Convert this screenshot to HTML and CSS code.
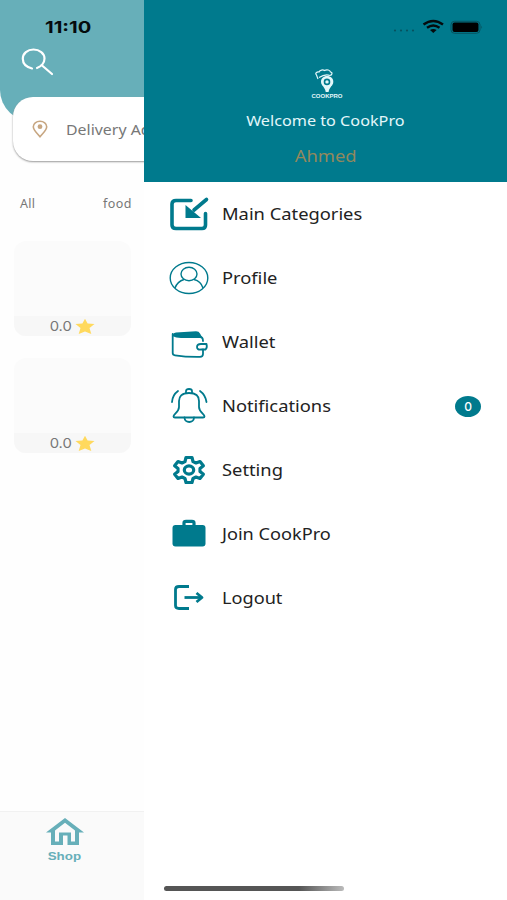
FILE: index.html
```html
<!DOCTYPE html>
<html lang="en">
<head>
<meta charset="utf-8">
<title>CookPro</title>
<link rel="stylesheet" href="styles.css">
</head>
<body>
<div class="app">
  <section class="shop">
    <header class="shop-header">
      <svg class="search" viewBox="0 0 34 28"><path d="M11 20.500C5 19 1.800 15.500 1.800 10.800C1.800 5.500 6.500 1.500 12.500 1.500S23.500 5.500 23.500 10.500C23.500 14.500 20.500 18.500 16 20M20.500 17L31 26"/></svg>
    </header>
    <div class="address">
      <svg class="pin" viewBox="0 0 16 18"><path d="M8 16.800C5 13 1.300 10.500 1.300 6.800C1.300 3.500 4.300 1.200 8 1.200S14.700 3.500 14.700 6.800C14.700 10.500 11 13 8 16.800Z"/><circle cx="8" cy="6.700" r="2.400"/></svg>
      <span class="address-text">Delivery Address</span>
    </div>
    <div class="tabs"><span>All</span><span class="tab-food">food</span></div>
    <div class="cards">
      <article class="card"><div class="rating"><span class="score">0.0</span><svg class="star" viewBox="0 0 20 17"><path d="M10 .7L12.600 5.500L19.500 6.100L14.500 10L16.300 16L10 13.500L3.700 16L5.500 10L.5 6.100L7.400 5.500Z"/></svg></div></article>
      <article class="card"><div class="rating"><span class="score">0.0</span><svg class="star" viewBox="0 0 20 17"><path d="M10 .7L12.600 5.500L19.500 6.100L14.500 10L16.300 16L10 13.500L3.700 16L5.500 10L.5 6.100L7.400 5.500Z"/></svg></div></article>
    </div>
    <nav class="bottom-nav">
      <svg class="home" viewBox="0 0 38 28"><path fill-rule="evenodd" d="M0 14.500L19 0L38 14.500H33V27H21.500V17.500H17V27H5V14.500ZM9 12.500V23.500H13V14.500H25V23.500H29V12.500L19 4.800Z"/></svg>
      <span class="nav-label">Shop</span>
    </nav>
  </section>

  <aside class="drawer">
    <header class="drawer-header">
      <svg class="logo" viewBox="0 0 34 30">
        <path class="hat" d="M8 10L6.500 6C4.500 4.500 7 2.500 9 3C10 .8 13 .5 14.500 1.500C17 0 20 1.200 20.500 3C23 3.500 22 6 20 6.500M9 8.500C13 6 17 5.300 20 6.500"/>
        <path class="mark" fill-rule="evenodd" d="M17 7C21 7 23.300 9.500 23.300 12.800C23.300 17 19.500 17.500 18.600 23H15.700C15 17.500 11 17 11 12.800C11 9.500 13.500 7 17 7ZM17 9.600A3.300 3.300 0 1 0 17 16.200A3.300 3.300 0 1 0 17 9.600Z"/>
        <circle cx="17" cy="12.900" r="1.700" class="mark"/>
        <text x="1.500" y="28.500" textLength="31" lengthAdjust="spacingAndGlyphs">COOKPRO</text>
      </svg>
      <p class="welcome">Welcome to CookPro</p>
      <p class="user">Ahmed</p>
    </header>
    <ul class="menu">
      <li><svg class="icon" viewBox="0 0 38 38"><path class="bold" d="M21 5.500H6Q2 5.500 2 9V30Q2 33.500 6 33.500H32Q35.500 33.500 35.500 30V18.500"/><path class="bold" d="M36.500 4.500L24 15"/><path class="solid" d="M15.500 10V23H31Z"/></svg><span class="label">Main Categories</span></li>
      <li><svg class="icon" viewBox="0 0 38 38"><g class="thin"><ellipse cx="19" cy="19" rx="18.800" ry="15.500"/><ellipse cx="19" cy="15" rx="8" ry="6.800"/><path d="M5 29C7 23.500 10.500 21.500 14 20.500M24 20.500C28 21.500 31.500 24 33 29"/></g></svg><span class="label">Profile</span></li>
      <li><svg class="icon down" viewBox="0 0 38 38"><path class="solid" d="M3 9.500Q3 7.800 6 7.500L26 6.300Q29 6.300 30 8.500L32 12Q18 13 6 11.500Q3 11 3 9.500Z"/><g class="line"><path d="M2.700 9V28Q2.700 30 5 30.300Q16 32 30 31.800Q33 31.800 33 29V24.500M4 10.500Q6 12 11 12L30 12Q33 12 33 16"/><path d="M36.500 19H31Q27 19 27 22T31 24.500H35.500Q37.500 23 36.500 19Z"/></g></svg><span class="label">Wallet</span></li>
      <li><svg class="icon" viewBox="0 0 38 38"><g class="line"><path d="M19 6C11.500 6 9 9.500 9 14V20C9 25 3.500 27 3.500 29.500Q3.500 30.500 5 30.500H33Q34.500 30.500 34.500 29.500C34.500 27 29 25 29 20V14C29 9.500 26.500 6 19 6Z"/><path d="M16 6V4Q16 2 19 2T22 4V6M14.500 30.500C14.500 36.500 24 36.500 24 30.500M8 4Q2.500 8 2 15M30 4Q35.500 8 36.500 15"/></g></svg><span class="label">Notifications</span><span class="badge">0</span></li>
      <li><svg class="icon" viewBox="0 0 38 38"><g class="gear"><path d="M16 6.500H22L23 10.600L26 12L30 10.500L33.400 14.800L30 17.500V20.500L33.400 23.300L30 27.500L26 26L23 27.500L22 31.500H16L15 27.500L12 26L8 27.500L4.600 23.300L8 20.500V17.500L4.600 14.800L8 10.500L12 12L15 10.600Z"/><ellipse cx="19" cy="19" rx="4.700" ry="4.100"/></g></svg><span class="label">Setting</span></li>
      <li><svg class="icon" viewBox="0 0 38 38"><rect class="solid" x="2.500" y="10" width="33" height="21.500" rx="3"/><path class="gear" d="M14 11V8Q14 6.300 16 6.300H22Q24 6.300 24 8V11"/></svg><span class="label join">Join CookPro</span></li>
      <li><svg class="icon" viewBox="0 0 38 38"><path class="exit" d="M19 7.500H9Q5.500 7.500 5.500 10.500V26.500Q5.500 29.500 9 29.500H19"/><path class="exit" d="M14.500 18.500H31"/><path class="exit" d="M26.500 14L32 18.500L26.500 23"/></svg><span class="label join">Logout</span></li>
    </ul>
  </aside>

  <div class="status-bar">
    <time>11:10</time>
    <svg class="status-icons" viewBox="0 0 92 18">
      <g class="dots"><circle cx="3" cy="12.500" r="1.100"/><circle cx="9" cy="12.500" r="1.100"/><circle cx="15" cy="12.500" r="1.100"/><circle cx="21" cy="12.500" r="1.100"/></g>
      <g class="wifi"><path d="M31.500 6.500Q41.300-.7 51 6.500M35 9.800Q41.300 5.200 47.500 9.800"/><path class="wifi-end" d="M38 12Q41.300 10 44.600 12L41.300 15Z"/></g>
      <rect class="battery-frame" x="59" y="3.300" width="29" height="12" rx="3.500"/><rect x="60.500" y="4.600" width="26" height="9.400" rx="2"/><path class="battery-tip" d="M89.300 7.500Q91 9.300 89.300 11.100Z"/>
    </svg>
  </div>
  <div class="home-indicator"></div>
</div>
</body>
</html>
```
FILE: styles.css
```css
* { box-sizing: border-box; }
body { margin: 0; background: #fff; font-family: "Noto Sans", "Open Sans", sans-serif; }
svg { display: block; flex: none; overflow: visible; }
.app { position: relative; display: flex; width: 507px; height: 900px; overflow: hidden; }

.shop { display: flex; flex-direction: column; width: 144px; overflow: hidden; background: #fefefe; color: #777; }
.shop-header { flex: none; height: 122px; padding: 48px 0 0 21px; background: #67afb9; border-bottom-left-radius: 34px 32px; }
.search { width: 34px; height: 28px; fill: none; stroke: #fff; stroke-width: 2.200; stroke-linecap: round; }
.address { display: flex; flex: none; align-items: center; width: 300px; height: 64px; margin: -25px 0 0 13px; padding-left: 19px; gap: 18px; background: #fff; border-radius: 20px; box-shadow: 0 1px 2px #999; }
.pin { width: 16px; height: 18px; fill: none; stroke: #c7a681; stroke-width: 1.6; }
.pin circle { fill: #c7a681; stroke: none; }
.address-text { font-size: 15px; white-space: nowrap; transform: scaleX(1.06); transform-origin: left; }
.tabs { display: flex; justify-content: space-between; padding: 33px 12px 0 20px; font-size: 12.500px; line-height: 20px; letter-spacing: .3px; }
.tab-food { letter-spacing: .5px; }
.cards { display: flex; flex-direction: column; gap: 22px; padding: 27px 13px 0 14px; }
.card { display: flex; flex-direction: column; justify-content: flex-end; height: 95px; border-radius: 12px; overflow: hidden; background: #fbfbfb; }
.rating { display: flex; align-items: center; justify-content: center; gap: 5px; height: 20px; padding-left: 1px; background: #f7f7f7; font: 13px/19px Inter, sans-serif; }
.score { transform: scaleX(1.14); }
.star { width: 20px; height: 17px; fill: #ffd95d; }
.bottom-nav { display: flex; flex-direction: column; align-items: center; height: 89px; margin-top: auto; padding: 6px 15px 0 0; border-top: 1px solid #f1f1f1; background: #fafafa; color: #67afb9; font: bold 11.500px/16px "Liberation Sans", sans-serif; }
.nav-label { transform: scaleX(1.16); }
.home { width: 38px; height: 28px; margin-bottom: 2px; fill: #67afb9; }

.drawer { flex: 1; background: #fff; }
.drawer-header { display: flex; flex-direction: column; align-items: center; height: 182px; padding-top: 69px; background: #007a8d; color: #e4f7fa; }
.logo { width: 34px; height: 30px; margin-left: 2px; }
.hat { fill: none; stroke: #e4f7fa; stroke-width: 1.200; }
.mark { fill: #e4f7fa; }
.logo text { fill: #e4f7fa; font: bold 6px "Liberation Sans", sans-serif; }
.welcome { margin: 9px 0 0; font-size: 15px; line-height: 24px; transform: scaleX(1.08); }
.user { margin: 10px 0 0; color: #93885d; font-size: 17px; line-height: 28px; transform: scaleX(1.08); }
.menu { margin: 0; padding: 0 26px; list-style: none; }
.menu li { display: flex; align-items: center; height: 64px; }
.icon { width: 38px; height: 38px; margin-right: 14px; fill: none; stroke: #007a8d; stroke-linejoin: round; }
.down { margin-top: 3px; }
.bold { stroke-width: 3.600; stroke-linecap: round; }
.solid { fill: #007a8d; stroke: none; }
.thin { stroke-width: 1.400; }
.line { stroke-width: 1.800; stroke-linecap: round; }
.gear { stroke-width: 3.200; }
.exit { stroke-width: 2.800; }
.label { padding-bottom: 1px; color: #222; font-size: 16.500px; line-height: 24px; white-space: nowrap; transform: scaleX(1.11); transform-origin: left; }
.join { transform: scaleX(1.1); }
.badge { width: 26px; height: 21px; margin-left: auto; border-radius: 50%; background: #007a8d; color: #fff; font: 500 12px/21px Inter, sans-serif; text-align: center; }

.status-bar { position: absolute; inset: 18px 23px auto 45px; display: flex; justify-content: space-between; color: #050b0d; }
.status-bar time { font: bold 16.500px/18px Inter, sans-serif; transform: scaleX(1.22); transform-origin: left; }
.status-icons { width: 92px; height: 18px; }
.dots { fill: #07535f; }
.wifi { fill: none; stroke: #050b0d; stroke-width: 2.400; }
.wifi-end { fill: #050b0d; stroke: none; }
.battery-frame { fill: none; stroke: #07535f; stroke-width: 1; }
.battery-tip { fill: #07535f; }
.home-indicator { position: absolute; left: 164px; bottom: 9px; width: 180px; height: 5px; border-radius: 3px; background: linear-gradient(90deg, #555 0 75%, #bbb); }
```
